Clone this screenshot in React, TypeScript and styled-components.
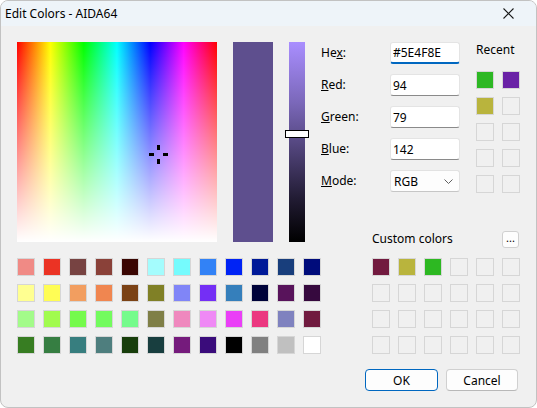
import React from 'react';
import styled, { createGlobalStyle } from 'styled-components';

const GlobalStyle = createGlobalStyle`
    html, body {
        margin: 0;
        padding: 0;
        background: #ffffff;
    }
    body {
        font-family: "Noto Sans", "Open Sans", sans-serif;
        font-size: 12px;
        color: #000;
    }
`

const basicColors = [
    '#f08a85', '#eb3324', '#774342', '#8a4139', '#3b0703', '#a4fcfd', '#75fbfd', '#3282f6', '#0023f5', '#001998', '#183e7c', '#000c7b',
    '#ffff91', '#fffd55', '#f29e60', '#f08650', '#7b4215', '#808026', '#8085f7', '#742ff5', '#357fbb', '#00033a', '#58135b', '#36093e',
    '#a3fb8a', '#a1fb4e', '#75fa4c', '#73fb5e', '#75fb8c', '#7f7f47', '#ef88be', '#ef89f5', '#ea3ff7', '#eb3780', '#7f82bf', '#701a3f',
    '#377d22', '#367e42', '#377e7f', '#4e7e7e', '#183e0c', '#183e3f', '#751b7c', '#3a0c7b', '#000000', '#808080', '#c0c0c0', '#ffffff',
]

const recentColors = ['#2db824', '#6a22a6', '#b9b43d', '', '', '', '', '', '', '']

const customColors = ['#721a3f', '#b9b43d', '#2db822', ...Array(21).fill('')]

const fields = [
    { key: 'x', before: 'He', after: ':', value: '#5E4F8E', focused: true },
    { key: 'R', before: '', after: 'ed:', value: '94' },
    { key: 'G', before: '', after: 'reen:', value: '79' },
    { key: 'B', before: '', after: 'lue:', value: '142' },
]

export default function App() {
    return (
        <>
            <GlobalStyle/>
            <Window>
                <TitleBar>
                    <Title>Edit Colors - AIDA64</Title>
                    <CloseButton>
                        <svg width="11" height="11" viewBox="0 0 11 11">
                            <path d="M0.5 0.5 L10.5 10.5 M10.5 0.5 L0.5 10.5" stroke="#1a1a1a" strokeWidth="1.1" fill="none"/>
                        </svg>
                    </CloseButton>
                </TitleBar>
                <Body>
                    <LeftCol>
                        <PickerRow>
                            <Spectrum>
                                <Crosshair width="19" height="19" viewBox="0 0 19 19">
                                    <rect x="8" y="0" width="3" height="5" fill="#000"/>
                                    <rect x="8" y="14" width="3" height="5" fill="#000"/>
                                    <rect x="0" y="8" width="5" height="3" fill="#000"/>
                                    <rect x="14" y="8" width="5" height="3" fill="#000"/>
                                </Crosshair>
                            </Spectrum>
                            <Preview $color="#5E4F8E"/>
                            <LumSlider>
                                <Thumb/>
                            </LumSlider>
                        </PickerRow>
                        <SwatchGrid $cols={12}>
                            {basicColors.map((c, i) => <Swatch key={i} $color={c}/>)}
                        </SwatchGrid>
                    </LeftCol>
                    <RightCol>
                        <TopPart>
                            <Form>
                                {fields.map(f => (
                                    <FieldRow key={f.key}>
                                        <Label>{f.before}<u>{f.key}</u>{f.after}</Label>
                                        <TextBox $focused={!!f.focused} defaultValue={f.value}/>
                                    </FieldRow>
                                ))}
                                <FieldRow>
                                    <Label><u>M</u>ode:</Label>
                                    <Select>
                                        <span>RGB</span>
                                        <svg width="9" height="5" viewBox="0 0 9 5">
                                            <path d="M0.5 0.5 L4.5 4.5 L8.5 0.5" stroke="#606060" strokeWidth="1" fill="none"/>
                                        </svg>
                                    </Select>
                                </FieldRow>
                            </Form>
                            <Recent>
                                <SectionTitle>Recent</SectionTitle>
                                <SwatchGrid $cols={2}>
                                    {recentColors.map((c, i) => <Swatch key={i} $color={c}/>)}
                                </SwatchGrid>
                            </Recent>
                        </TopPart>
                        <Custom>
                            <CustomHeader>
                                <SectionTitle>Custom colors</SectionTitle>
                                <DotsButton>...</DotsButton>
                            </CustomHeader>
                            <SwatchGrid $cols={6}>
                                {customColors.map((c, i) => <Swatch key={i} $color={c}/>)}
                            </SwatchGrid>
                        </Custom>
                        <ButtonRow>
                            <DialogButton $primary>OK</DialogButton>
                            <DialogButton>Cancel</DialogButton>
                        </ButtonRow>
                    </RightCol>
                </Body>
            </Window>
        </>
    );
}

const Window = styled.div`
    width: 537px;
    height: 408px;
    box-sizing: border-box;
    border: 1px solid #c2c2c2;
    border-radius: 8px;
    overflow: hidden;
    background: #f0f0f0;
    display: flex;
    flex-direction: column;
`

const TitleBar = styled.div`
    height: 25px;
    background: #eef4f9;
    display: flex;
    align-items: center;
    justify-content: space-between;
    padding-left: 4px;
`

const Title = styled.span`
    font-size: 12px;
    line-height: 16px;
`

const CloseButton = styled.div`
    width: 46px;
    height: 25px;
    display: flex;
    align-items: center;
    justify-content: center;
    margin-right: 5px;
`

const Body = styled.div`
    display: flex;
    padding: 16px 0 0 16px;
`

const LeftCol = styled.div`
    display: flex;
    flex-direction: column;
    gap: 16px;
`

const PickerRow = styled.div`
    display: flex;
    gap: 16px;
    height: 200px;
`

const Spectrum = styled.div`
    position: relative;
    width: 200px;
    height: 200px;
    background: linear-gradient(to bottom, rgba(255, 255, 255, 0), #ffffff),
        linear-gradient(to right, #ff0000, #ffff00, #00ff00, #00ffff, #0000ff, #ff00ff, #ff0000);
`

const Crosshair = styled.svg`
    position: absolute;
    left: 132px;
    top: 103px;
`

const Preview = styled.div<{ $color: string }>`
    width: 40px;
    height: 200px;
    background: ${p => p.$color};
`

const LumSlider = styled.div`
    position: relative;
    width: 16px;
    height: 200px;
    background: linear-gradient(to bottom, #a98eff, #7b68ba 30%, #5e4f8e 46%, #221c34 78%, #000000);
`

const Thumb = styled.div`
    position: absolute;
    left: -4px;
    top: 88px;
    width: 24px;
    height: 8px;
    box-sizing: border-box;
    background: #ffffff;
    border: 1px solid #000;
`

const SwatchGrid = styled.div<{ $cols: number }>`
    display: grid;
    grid-template-columns: repeat(${p => p.$cols}, 18px);
    grid-auto-rows: 18px;
    gap: 8px;
`

const Swatch = styled.div<{ $color: string }>`
    box-sizing: border-box;
    border: 1px solid #d6d6d6;
    background: ${p => p.$color || 'transparent'};
`

const RightCol = styled.div`
    width: 199px;
    display: flex;
    flex-direction: column;
`

const TopPart = styled.div`
    display: flex;
    gap: 16px;
`

const Form = styled.div`
    width: 139px;
    display: flex;
    flex-direction: column;
    gap: 10px;
`

const FieldRow = styled.div`
    display: flex;
    align-items: center;
    height: 22px;
`

const Label = styled.span`
    width: 69px;
    line-height: 16px;
`

const TextBox = styled.input<{ $focused: boolean }>`
    width: 70px;
    height: 22px;
    box-sizing: border-box;
    font: inherit;
    color: #000;
    background: #fff;
    border: 1px solid #e4e4e4;
    border-bottom: ${p => p.$focused ? '2px solid #0067c0' : '1px solid #8a8a8a'};
    border-radius: 3px;
    padding: 0 2px;
    outline: none;
`

const Select = styled.div`
    width: 70px;
    height: 22px;
    box-sizing: border-box;
    background: #fdfdfd;
    border: 1px solid #e2e2e2;
    border-bottom-color: #c6c6c6;
    border-radius: 3px;
    display: flex;
    align-items: center;
    justify-content: space-between;
    padding: 0 6px 0 3px;
`

const Recent = styled.div`
    width: 44px;
    display: flex;
    flex-direction: column;
    gap: 13px;
`

const SectionTitle = styled.span`
    line-height: 16px;
`

const Custom = styled.div`
    margin-left: 51px;
    margin-top: 38px;
    display: flex;
    flex-direction: column;
`

const CustomHeader = styled.div`
    display: flex;
    justify-content: space-between;
    align-items: flex-start;
    height: 17px;
    margin-top: -2px;
    padding-top: 2px;
    margin-bottom: 10px;
    padding-right: 1px;
`

const DotsButton = styled.div`
    width: 17px;
    height: 17px;
    box-sizing: border-box;
    background: #fdfdfd;
    border: 1px solid #d0d0d0;
    border-radius: 3px;
    font-size: 11px;
    line-height: 12px;
    text-align: center;
`

const ButtonRow = styled.div`
    display: flex;
    justify-content: flex-end;
    gap: 8px;
    margin-top: 15px;
    margin-right: 2px;
`

const DialogButton = styled.div<{ $primary?: boolean }>`
    flex-shrink: 0;
    width: ${p => p.$primary ? 73 : 72}px;
    height: 22px;
    box-sizing: border-box;
    background: #fdfdfd;
    border: 1px solid ${p => p.$primary ? '#0067c0' : '#d0d0d0'};
    border-bottom-color: ${p => p.$primary ? '#0067c0' : '#b8b8b8'};
    border-radius: 4px;
    display: flex;
    align-items: center;
    justify-content: center;
`
